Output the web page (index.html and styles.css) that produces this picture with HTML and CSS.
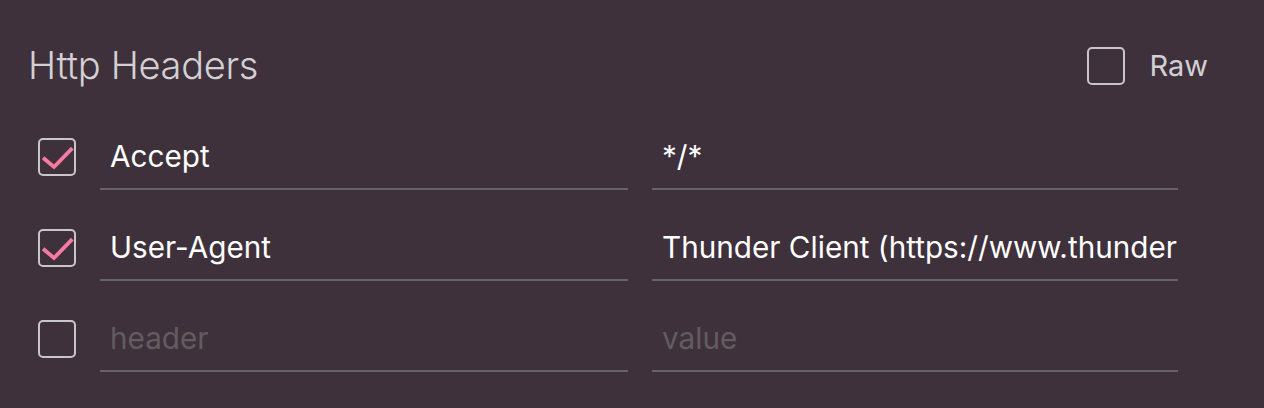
FILE: index.html
```html
<!DOCTYPE html>
<html lang="en">
<head>
<meta charset="utf-8">
<title>Http Headers</title>
<link rel="stylesheet" href="styles.css">
</head>
<body>
<div class="panel">
  <div class="header">
    <h1 class="title">Http Headers</h1>
    <label class="raw">
      <span class="box"></span>
      <span class="raw-text">Raw</span>
    </label>
  </div>
  <div class="rows">
    <div class="row">
      <span class="box checked">
        <svg viewBox="0 0 38 38" width="38" height="38"><path d="M6.5 21 L16 29 L33 11.5" fill="none" stroke="#f57ba1" stroke-width="3.8" stroke-linecap="square" stroke-linejoin="miter"/></svg>
      </span>
      <div class="field key"><span class="val">Accept</span></div>
      <div class="field value"><span class="val">*/*</span></div>
    </div>
    <div class="row">
      <span class="box checked">
        <svg viewBox="0 0 38 38" width="38" height="38"><path d="M6.5 21 L16 29 L33 11.5" fill="none" stroke="#f57ba1" stroke-width="3.8" stroke-linecap="square" stroke-linejoin="miter"/></svg>
      </span>
      <div class="field key"><span class="val">User-Agent</span></div>
      <div class="field value"><span class="val">Thunder Client (https://www.thunder</span></div>
    </div>
    <div class="row">
      <span class="box"></span>
      <div class="field key"><span class="ph">header</span></div>
      <div class="field value"><span class="ph">value</span></div>
    </div>
  </div>
</div>
</body>
</html>
```

FILE: styles.css
```css
html, body {
  margin: 0;
  padding: 0;
  background: #3e313b;
}
body {
  width: 1264px;
  height: 408px;
  overflow: hidden;
  font-family: Inter, "Noto Sans", sans-serif;
}
.panel {
  padding: 39px 56px 0 28px;
}
.header {
  display: flex;
  align-items: center;
  justify-content: space-between;
  height: 52px;
}
.title {
  margin: 0;
  font-size: 38px;
  font-weight: 300;
  color: #d3d0d3;
  line-height: 52px;
  letter-spacing: -0.3px;
}
.raw {
  display: flex;
  align-items: center;
  gap: 24px;
  margin-top: 2px;
}
.raw-text {
  font-size: 29px;
  color: #d3d0d3;
  line-height: 40px;
}
.box {
  box-sizing: border-box;
  width: 38px;
  height: 38px;
  border: 2px solid #c9c6c9;
  border-radius: 5px;
  flex: none;
  position: relative;
}
.box svg {
  position: absolute;
  left: -2px;
  top: -2px;
}
.rows {
  margin-top: 39px;
  display: flex;
  flex-direction: column;
  gap: 31px;
}
.row {
  display: flex;
  align-items: flex-start;
  padding-left: 10px;
  gap: 24px;
}
.row .box {
  margin-top: 8px;
}
.field {
  box-sizing: border-box;
  height: 60px;
  padding: 2px 0 8px 10px;
  border-bottom: 2px solid #666466;
  line-height: 48px;
  font-size: 29.7px;
  white-space: nowrap;
  overflow: hidden;
}
.key { width: 528px; }
.value { width: 526px; }
.val { color: #ffffff; }
.ph { color: #625c61; }
```
